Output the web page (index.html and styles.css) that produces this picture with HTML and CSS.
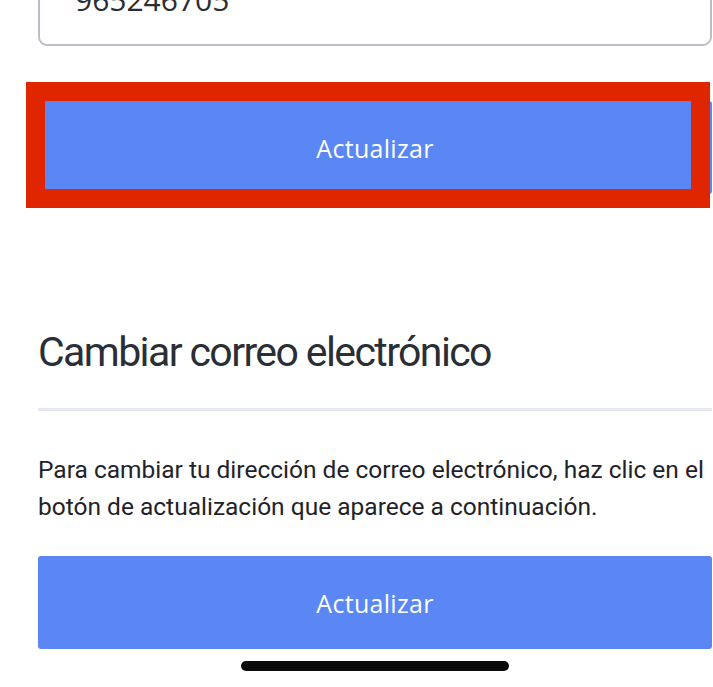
FILE: index.html
```html
<!DOCTYPE html>
<html lang="es">
<head>
<meta charset="utf-8">
<link rel="stylesheet" href="styles.css">
</head>
<body>
<main class="page">
  <div class="field">
    <span class="field-value">965246705</span>
  </div>
  <div class="btn-wrap">
    <button class="btn">Actualizar</button>
    <span class="highlight"></span>
  </div>
  <section class="section">
    <h2 class="section-title">Cambiar correo electrónico</h2>
    <hr class="divider">
    <p class="section-text">Para cambiar tu dirección de correo electrónico, haz clic en el botón de actualización que aparece a continuación.</p>
    <button class="btn">Actualizar</button>
  </section>
</main>
<div class="home-indicator"></div>
</body>
</html>
```

FILE: styles.css
```css
html, body {
  margin: 0;
  padding: 0;
  overflow: hidden;
  background: #ffffff;
}
body {
  width: 713px;
  height: 687px;
  position: relative;
  font-family: "Open Sans", "Noto Sans", sans-serif;
  color: #23272e;
}
.page {
  width: 674px;
  margin: -48px 0 0 38px;
  display: flex;
  flex-direction: column;
}
.field {
  height: 94px;
  border: 2px solid #bcbdc6;
  border-radius: 9px;
  display: flex;
  align-items: center;
  padding-left: 35px;
  box-sizing: border-box;
}
.field-value {
  font-size: 30px;
  font-weight: 400;
  color: #2a2d33;
}
.btn-wrap {
  position: relative;
  margin-top: 55px;
}
.btn {
  display: block;
  width: 100%;
  height: 93px;
  border: 0;
  border-radius: 3px;
  background: #5a87f3;
  color: #ffffff;
  font-family: "Open Sans", "Noto Sans", sans-serif;
  font-size: 25px;
  font-weight: 400;
  letter-spacing: 0.3px;
  padding: 0;
}
.highlight {
  position: absolute;
  left: -12px;
  top: -19px;
  width: 684px;
  height: 126px;
  border: 19px solid #e02600;
  box-sizing: border-box;
}
.section {
  margin-top: 132px;
}
.section-title {
  margin: 0;
  font-family: Roboto, "Open Sans", sans-serif;
  font-size: 41px;
  font-weight: 400;
  letter-spacing: -1.6px;
  line-height: 52px;
  color: #2a2e35;
}
.divider {
  margin: 30px 0 0 0;
  border: 0;
  height: 3px;
  background: #e6e9f1;
}
.section-text {
  margin: 40px 0 0 0;
  font-family: Roboto, "Open Sans", sans-serif;
  font-size: 24.5px;
  line-height: 37px;
  color: #1f2329;
}
.section .btn {
  margin-top: 31px;
}
.home-indicator {
  position: absolute;
  left: 241px;
  top: 661px;
  width: 268px;
  height: 10px;
  border-radius: 5px;
  background: #0a0a0a;
}
```
